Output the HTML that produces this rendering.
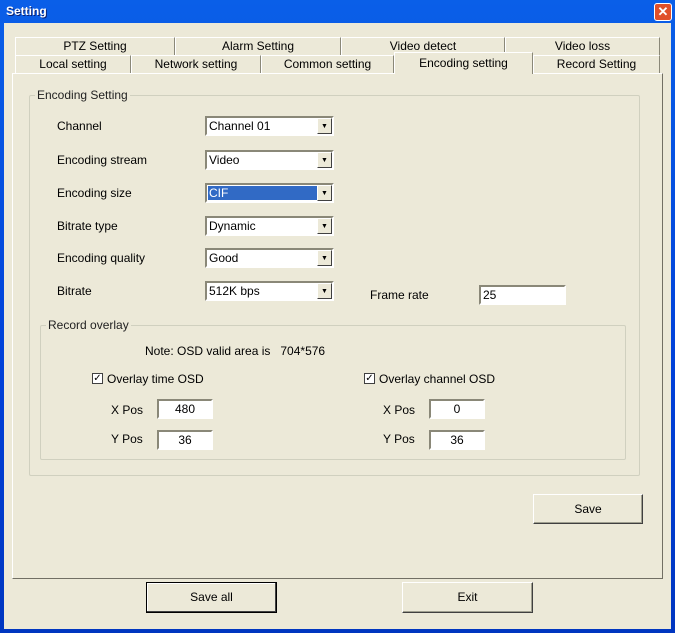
<!DOCTYPE html>
<html><head><style>
*{box-sizing:border-box;margin:0;padding:0}
body{width:675px;height:633px;overflow:hidden;background:#0a3fc8;font-family:"Liberation Sans",sans-serif;font-size:11px;color:#000}
.win{position:absolute;left:0;top:0;width:675px;height:633px;background:linear-gradient(#0a5fe8,#0040d8 60%,#0036c0);}
.title{position:absolute;left:6px;top:4px;color:#fff;font-weight:bold;font-size:12px;text-shadow:1px 1px #0a1f70}
.close{position:absolute;left:654px;top:3px;width:18px;height:18px;background:#e0502a;border:1px solid #fff;border-radius:3px;color:#fff;font-weight:bold;text-align:center;line-height:16px;font-size:13px}
.body{position:absolute;left:4px;top:23px;width:667px;height:606px;background:#ece9d8}
.a{position:absolute}
.tab{position:absolute;height:18px;border-top:1px solid #fff;border-left:1px solid #fff;border-right:1px solid #8a8878;text-align:center;line-height:16px;font-size:12px;background:#ece9d8}
.panel{position:absolute;left:12px;top:73px;width:651px;height:506px;border-top:1px solid #fff;border-left:1px solid #fff;border-right:1px solid #716f64;border-bottom:1px solid #716f64}
.grp{position:absolute;border:1px solid #d0d0bf;border-radius:2px}
.grp span{position:absolute;top:-8px;left:5px;background:#ece9d8;padding:0 2px;font-size:12px;color:#222}
.lbl{position:absolute;font-size:12px}
.combo{position:absolute;width:129px;height:20px;background:#fff;border:2px solid;border-color:#8a8878 #fff #fff #8a8878;font-size:12px;line-height:16px;padding-left:2px}
.combo .ar{position:absolute;right:0;top:0;width:15px;height:16px;background:#ece9d8;border:1px solid;border-color:#fff #404040 #404040 #fff;font-size:7px;text-align:center;line-height:15px}
.edit{position:absolute;height:20px;background:#fff;border:2px solid;border-color:#8a8878 #fff #fff #8a8878;font-size:12px;line-height:16px}
.btn{position:absolute;background:#ece9d8;border:1px solid;border-color:#fff #404040 #404040 #fff;box-shadow:inset -1px -1px #a0a090;text-align:center;font-size:12px}
.chk{position:absolute;width:11px;height:11px;border:1px solid #404040;background:#fff;font-size:10px;line-height:9px;text-align:center}
</style></head><body>
<div class="win">
<div class="title">Setting</div>
<div class="close">✕</div>
</div>
<div class="body" style="left:4px;top:23px">
</div>
<div class="a" style="left:0;top:0;width:675px;height:633px">
<div class="tab" style="left:15px;top:37px;width:160px">PTZ Setting</div>
<div class="tab" style="left:175px;top:37px;width:166px">Alarm Setting</div>
<div class="tab" style="left:341px;top:37px;width:164px">Video detect</div>
<div class="tab" style="left:505px;top:37px;width:155px">Video loss</div>
<div class="panel"></div>
<div class="tab" style="left:15px;top:55px;width:116px">Local setting</div>
<div class="tab" style="left:131px;top:55px;width:130px">Network setting</div>
<div class="tab" style="left:261px;top:55px;width:133px">Common setting</div>
<div class="tab" style="left:394px;top:52px;width:139px;height:22px;line-height:20px;border-bottom:none">Encoding setting</div>
<div class="tab" style="left:533px;top:55px;width:127px">Record Setting</div>

<div class="grp" style="left:29px;top:95px;width:611px;height:381px"><span>Encoding Setting</span></div>
<div class="lbl" style="left:57px;top:119px">Channel</div>
<div class="lbl" style="left:57px;top:153px">Encoding stream</div>
<div class="lbl" style="left:57px;top:186px">Encoding size</div>
<div class="lbl" style="left:57px;top:219px">Bitrate type</div>
<div class="lbl" style="left:57px;top:251px">Encoding quality</div>
<div class="lbl" style="left:57px;top:284px">Bitrate</div>
<div class="combo" style="left:205px;top:116px">Channel 01<div class="ar">▼</div></div>
<div class="combo" style="left:205px;top:150px">Video<div class="ar">▼</div></div>
<div class="combo" style="left:205px;top:183px"><div style="position:absolute;left:1px;top:1px;width:110px;height:14px;background:#316ac5;color:#fff;line-height:14px;padding-left:1px">CIF</div><div class="ar">▼</div></div>
<div class="combo" style="left:205px;top:216px">Dynamic<div class="ar">▼</div></div>
<div class="combo" style="left:205px;top:248px">Good<div class="ar">▼</div></div>
<div class="combo" style="left:205px;top:281px">512K bps<div class="ar">▼</div></div>
<div class="lbl" style="left:370px;top:288px">Frame rate</div>
<div class="edit" style="left:479px;top:285px;width:87px;padding-left:2px">25</div>

<div class="grp" style="left:40px;top:325px;width:586px;height:135px"><span>Record overlay</span></div>
<div class="lbl" style="left:145px;top:344px">Note: OSD valid area is &nbsp;&nbsp;704*576</div>
<div class="chk" style="left:92px;top:373px">✓</div>
<div class="lbl" style="left:107px;top:372px">Overlay time OSD</div>
<div class="chk" style="left:364px;top:373px">✓</div>
<div class="lbl" style="left:379px;top:372px">Overlay channel OSD</div>
<div class="lbl" style="left:111px;top:403px">X Pos</div>
<div class="lbl" style="left:111px;top:432px">Y Pos</div>
<div class="lbl" style="left:383px;top:403px">X Pos</div>
<div class="lbl" style="left:383px;top:432px">Y Pos</div>
<div class="edit" style="left:157px;top:399px;width:56px;text-align:center">480</div>
<div class="edit" style="left:157px;top:430px;width:56px;text-align:center">36</div>
<div class="edit" style="left:429px;top:399px;width:56px;text-align:center">0</div>
<div class="edit" style="left:429px;top:430px;width:56px;text-align:center">36</div>

<div class="btn" style="left:533px;top:494px;width:110px;height:30px;line-height:28px">Save</div>
<div class="btn" style="left:146px;top:582px;width:131px;height:31px;line-height:29px;border:1px solid #000;box-shadow:inset -1px -1px #404040,inset 1px 1px #fff">Save all</div>
<div class="btn" style="left:402px;top:582px;width:131px;height:31px;line-height:29px">Exit</div>
</div>
</body></html>
